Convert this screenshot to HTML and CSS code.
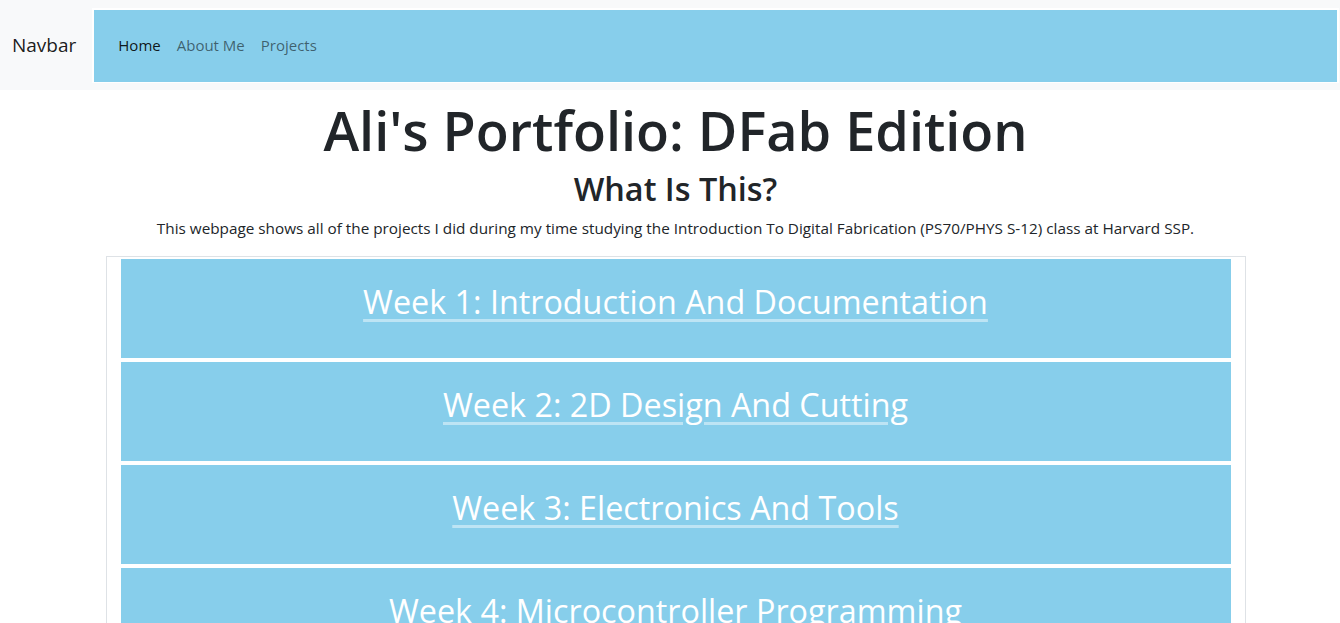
FILE: index.html
```html
<!DOCTYPE html>
<html lang="en">
<head>
<meta charset="utf-8">
<title>Ali's Portfolio</title>
<link rel="stylesheet" href="styles.css">
</head>
<body>
<nav class="navbar">
  <a class="brand" href="#">Navbar</a>
  <div class="nav-box">
    <div class="nav-inner">
      <a class="nav-link active" href="#">Home</a>
      <a class="nav-link" href="#">About Me</a>
      <a class="nav-link" href="#">Projects</a>
    </div>
  </div>
</nav>
<main class="main">
  <h1 class="title">Ali's Portfolio: DFab Edition</h1>
  <h2 class="subtitle">What Is This?</h2>
  <p class="intro">This webpage shows all of the projects I did during my time studying the Introduction To Digital Fabrication (PS70/PHYS S-12) class at Harvard SSP.</p>
  <div class="container">
    <div class="card"><a href="#">Week 1: Introduction And Documentation</a></div>
    <div class="card"><a href="#">Week 2: 2D Design And Cutting</a></div>
    <div class="card"><a href="#">Week 3: Electronics And Tools</a></div>
    <div class="card"><a href="#">Week 4: Microcontroller Programming</a></div>
  </div>
</main>
</body>
</html>
```
FILE: styles.css
```css
* { box-sizing: border-box; }
html, body { margin: 0; padding: 0; }
body {
  font-family: "Open Sans", "Noto Sans", sans-serif;
  color: #212529;
  background: #fff;
  font-size: 16px;
  line-height: 1.5;
  overflow: hidden;
}
.navbar {
  display: flex;
  align-items: center;
  height: 90px;
  background: #f8f9fa;
  padding: 0 1px 0 12px;
}
.brand {
  font-size: 19px;
  color: rgba(0,0,0,.9);
  text-decoration: none;
  margin-right: 16px;
}
.nav-box {
  flex: 1;
  background: #fff;
  padding: 2px 2px 1px 2px;
}
.nav-inner {
  background: #87ceeb;
  height: 72px;
  display: flex;
  align-items: center;
  padding: 0 16px;
}
.nav-link {
  padding: 0 8px;
  color: rgba(0,0,0,.55);
  text-decoration: none;
  font-size: 15px;
}
.nav-link.active { color: rgba(0,0,0,.9); }
.main {
  padding-left: 11px;
  text-align: center;
}
.title {
  margin: 8px 0 0;
  font-size: 54px;
  font-weight: 600;
  line-height: 1.2;
}
.subtitle {
  margin: 6px 0 0;
  font-size: 32.4px;
  font-weight: 600;
  line-height: 1.2;
}
.intro {
  margin: 8px 0 16px;
  font-size: 15.3px;
  line-height: 24px;
}
.container {
  width: 1140px;
  margin: 0 auto;
  border: 1px solid #dee2e6;
  padding: 2px 14px 0;
}
.card {
  background: #87ceeb;
  height: 99px;
  margin-bottom: 4px;
  padding-top: 18px;
}
.card a {
  color: #fff;
  font-size: 32.3px;
  text-decoration: underline;
  text-decoration-color: rgba(255,255,255,.45);
  text-decoration-thickness: 3px;
  text-underline-offset: 5px;
}
```
